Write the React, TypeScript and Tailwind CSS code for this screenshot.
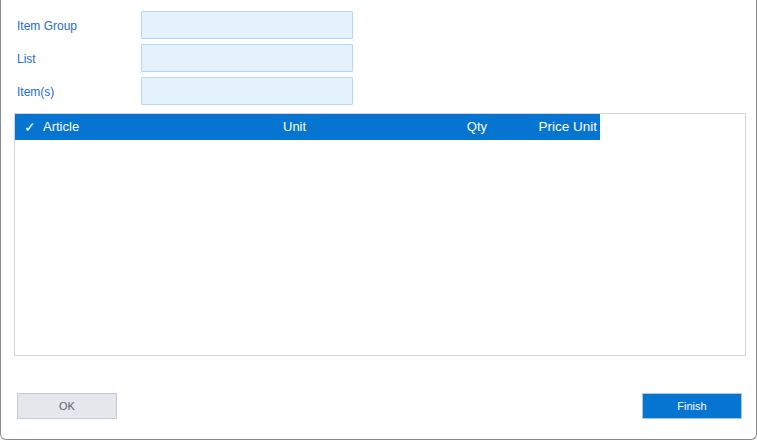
const FIELDS = ["Item Group", "List", "Item(s)"];

export default function App() {
  return (
    <div className="w-[757px] h-[441px] bg-white font-['Liberation_Sans',Arial,sans-serif]">
      <div className="h-[440px] border-l border-r border-b border-[#8a8a8a] rounded-b-[6px] bg-white flex flex-col">
        {/* filter fields */}
        <div className="flex flex-col gap-[5px] pt-[11px] pl-[16px]">
          {FIELDS.map((label) => (
            <div key={label} className="flex items-center h-[28px]">
              <span className="w-[124px] pt-[2px] text-[12px] text-[#1a6dcc]">{label}</span>
              <div className="w-[212px] h-[28px] bg-[#e5f1fb] border border-[#b3d7f7] rounded-[1px]" />
            </div>
          ))}
        </div>

        {/* table */}
        <div className="mt-[8px] ml-[13px] w-[732px] h-[243px] border border-[#d4d4d4]">
          <div className="w-[585px] h-[26px] bg-[#0674d1] flex items-center text-white text-[13px]">
            <span className="w-[28px] pl-[9px] text-[14px]">✓</span>
            <span className="w-[240px]">Article</span>
            <span className="w-[130px]">Unit</span>
            <span className="w-[77px] text-right pr-[3px]">Qty</span>
            <span className="w-[110px] text-right pr-[3px] text-[13.5px] whitespace-nowrap">Price Unit</span>
          </div>
        </div>

        {/* buttons */}
        <div className="flex justify-between items-center mt-[37px] pl-[16px] pr-[14px]">
          <button className="w-[100px] h-[26px] pt-[1px] bg-[#e4e7eb] border border-[#c3cad3] text-[11px] text-[#5b6470]">
            OK
          </button>
          <button className="w-[100px] h-[26px] pt-[1px] bg-[#0674d1] border border-[#a9c8e8] text-[11px] text-white">
            Finish
          </button>
        </div>
      </div>
    </div>
  );
}
